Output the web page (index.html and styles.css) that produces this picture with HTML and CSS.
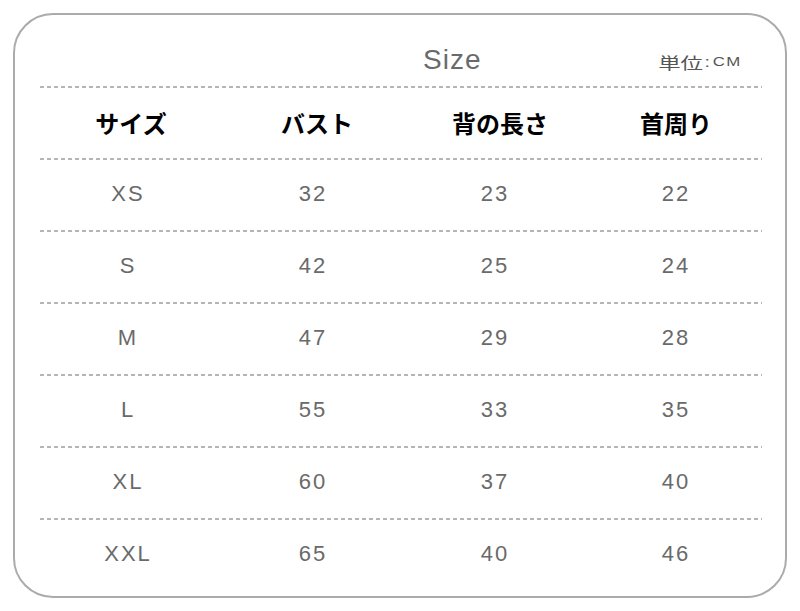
FILE: index.html
```html
<!DOCTYPE html>
<html lang="ja">
<head>
<meta charset="utf-8">
<title>Size</title>
<link rel="stylesheet" href="styles.css">
</head>
<body>
<div class="card">
  <div class="title-row">
    <span class="title">Size</span>
    <span class="unit">単位<span class="colon">:</span><span class="cm">CM</span></span>
  </div>
  <div class="row head">
    <div class="c1">サイズ</div><div class="c2">バスト</div><div class="c3">背の長さ</div><div class="c4">首周り</div>
  </div>
  <div class="row"><div class="c1">XS</div><div class="c2">32</div><div class="c3">23</div><div class="c4">22</div></div>
  <div class="row"><div class="c1">S</div><div class="c2">42</div><div class="c3">25</div><div class="c4">24</div></div>
  <div class="row"><div class="c1">M</div><div class="c2">47</div><div class="c3">29</div><div class="c4">28</div></div>
  <div class="row"><div class="c1">L</div><div class="c2">55</div><div class="c3">33</div><div class="c4">35</div></div>
  <div class="row"><div class="c1">XL</div><div class="c2">60</div><div class="c3">37</div><div class="c4">40</div></div>
  <div class="row"><div class="c1">XXL</div><div class="c2">65</div><div class="c3">40</div><div class="c4">46</div></div>
</div>
</body>
</html>
```

FILE: styles.css
```css
html, body {
  margin: 0;
  padding: 0;
  background: #ffffff;
}
body {
  padding: 13px;
  font-family: "Liberation Sans", Arial, "Noto Sans CJK JP", sans-serif;
}
.card {
  box-sizing: border-box;
  width: 774px;
  height: 585px;
  border: 2px solid #ababab;
  border-radius: 40px;
  padding: 0 23px 0 25px;
}
.title-row {
  height: 71px;
  display: flex;
  align-items: flex-end;
  padding-bottom: 12px;
  box-sizing: border-box;
}
.title {
  margin-left: 383px;
  font-size: 28px;
  line-height: 28px;
  color: #6a6a6a;
  letter-spacing: 1px;
}
.unit {
  margin-left: auto;
  margin-right: 20px;
  margin-bottom: 1px;
  font-family: "Noto Sans CJK JP", sans-serif;
  font-size: 16px;
  line-height: 22px;
  color: #555;
  display: flex;
  align-items: center;
  transform: scaleX(1.4);
  transform-origin: right center;
}
.colon {
  font-family: "Liberation Sans", Arial, sans-serif;
  font-size: 14px;
  margin: 0 2px 0 1px;
}
.cm {
  font-family: "Liberation Sans", Arial, sans-serif;
  font-size: 12px;
  letter-spacing: 1px;
}
.row {
  height: 72px;
  display: grid;
  grid-template-columns: 174px 196px 168px 184px;
  align-items: center;
  text-align: center;
  background-image: repeating-linear-gradient(90deg, #b5b5b5 0 4px, transparent 4px 7px);
  background-size: 100% 2px;
  background-repeat: no-repeat;
  background-position: top left;
  box-sizing: border-box;
  font-size: 22px;
  letter-spacing: 2px;
  color: #6a6a6a;
}
.row > div { padding-left: 2px; }
.row.head {
  font-family: "Noto Sans CJK JP", sans-serif;
  font-weight: 700;
  font-size: 24px;
  letter-spacing: 0;
  color: #000;
}
.head .c1 { padding-left: 8px; }
.head .c2 { padding-left: 10px; }
.head .c3 { padding-left: 12px; }
.head .c4 { padding-left: 12px; }
.row .c4 { padding-left: 12px; }
```
